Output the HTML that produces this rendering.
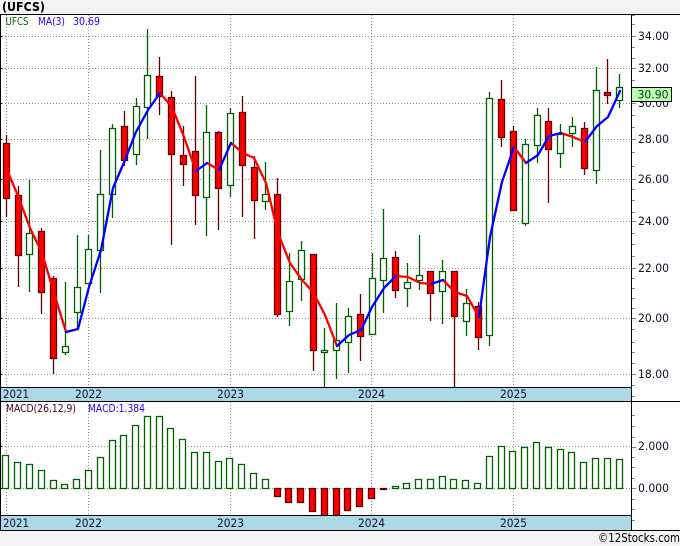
<!DOCTYPE html>
<html><head><meta charset="utf-8"><title>UFCS</title>
<style>
html,body{margin:0;padding:0;background:#f3f3f3;width:680px;height:546px;overflow:hidden}
svg{display:block}
text{font-family:"DejaVu Sans","Liberation Sans",sans-serif;font-size:11.5px;fill:#101028}
</style></head><body>
<svg width="680" height="546" viewBox="0 0 680 546" xmlns="http://www.w3.org/2000/svg">
<rect width="680" height="546" fill="#f3f3f3"/>
<rect x="0" y="14" width="680" height="517" fill="#fff"/>
<!-- grid -->
<path d="M2 36.5H632M2 68.5H632M2 103.5H632M2 139.5H632M2 179.5H632M2 221.5H632M2 268.5H632M2 318.5H632M2 374.5H632M2 446.5H632M2 488.5H632M6.5 15V387M88.5 15V387M230.5 15V387M371.5 15V387M513.5 15V387M6.5 402V516M88.5 402V516M230.5 402V516M371.5 402V516M513.5 402V516" stroke="#909090" stroke-width="1" stroke-dasharray="1 2" fill="none" shape-rendering="crispEdges"/>
<!-- green candles -->
<g stroke="#006000" stroke-width="1.3" fill="#fff">
<path fill="none" d="M29.5 180V292M65.5 282V355M77.5 235V329M88.5 235V283M100.5 150V293M112.5 124V218M136.5 98V165M147.5 29V139M206.5 105V236M230.5 108V197M265.5 162V210M289.5 253V326M301.5 241V301M324.5 328V387M336.5 303V379M348.5 308V373M372.5 253V334M383.5 209V313M407.5 263V307M419.5 235V290M442.5 260V324M466.5 289V336M489.5 92V346M525.5 139V226M537.5 108V163M560.5 124V168M572.5 117V147M596.5 67V184M619.5 74V108"/>
<path d="M26.5 233.5h6v21h-6zM62.5 346.5h6v6h-6zM74.5 287.5h6v25h-6zM85.5 249.5h6v34h-6zM97.5 194.5h6v56h-6zM109.5 128.5h6v66h-6zM133.5 106.5h6v48h-6zM144.5 75.5h6v32h-6zM203.5 132.5h6v65h-6zM227.5 113.5h6v72h-6zM262.5 194.5h6v7h-6zM286.5 281.5h6v30h-6zM298.5 250.5h6v29h-6zM321.5 350.5h6v2h-6zM333.5 340.5h6v10h-6zM345.5 316.5h6v26h-6zM369.5 278.5h6v56h-6zM380.5 258.5h6v22h-6zM404.5 282.5h6v6h-6zM416.5 275.5h6v5h-6zM439.5 271.5h6v20h-6zM463.5 303.5h6v18h-6zM486.5 98.5h6v237h-6zM522.5 144.5h6v79h-6zM534.5 115.5h6v30h-6zM557.5 134.5h6v19h-6zM569.5 126.5h6v7h-6zM593.5 90.5h6v80h-6zM616.5 87.5h6v13h-6z"/>
</g>
<!-- red candles -->
<g stroke="#600000" stroke-width="1.3" fill="#ff0000">
<path fill="none" d="M6.5 135V217M18.5 186V287M41.5 228V314M53.5 276V374M124.5 111V166M159.5 57V115M171.5 91V245M183.5 126V186M195.5 76V225M218.5 131V230M242.5 96V217M254.5 156V239M277.5 178V317M313.5 254V371M360.5 294V361M395.5 251V298M430.5 271V321M454.5 271V387M478.5 302V350M501.5 80V147M513.5 126V210M548.5 108V203M584.5 122V175M607.5 59V104"/>
<path d="M3.5 143.5h6v55h-6zM15.5 195.5h6v60h-6zM38.5 231.5h6v61h-6zM50.5 278.5h6v80h-6zM121.5 126.5h6v34h-6zM156.5 76.5h6v20h-6zM168.5 97.5h6v57h-6zM180.5 155.5h6v9h-6zM192.5 151.5h6v44h-6zM215.5 132.5h6v56h-6zM239.5 112.5h6v53h-6zM251.5 167.5h6v33h-6zM274.5 194.5h6v120h-6zM310.5 254.5h6v96h-6zM357.5 314.5h6v22h-6zM392.5 257.5h6v33h-6zM427.5 271.5h6v22h-6zM451.5 271.5h6v45h-6zM475.5 306.5h6v31h-6zM498.5 99.5h6v38h-6zM510.5 131.5h6v79h-6zM545.5 121.5h6v28h-6zM581.5 128.5h6v40h-6zM604.5 92.5h6v3h-6z"/>
</g>
<!-- MA line -->
<g fill="none" stroke-width="2.3" stroke-linejoin="round" stroke-linecap="round">
<path stroke="#ff0000" d="M7 170L18.5 197L30 228L42 253L54 293L66 332M160 93L172 107L184 137L196 171M207 163L219 170M231 143L243 153L254 158L266 183L278 233L290 263L302 280L313 292L325 315L337 346M396 276L408 277L420 283L431 284M443 280L455 292L467 296L479 317M514 147L526 163M561 133L573 137L585 142"/>
<path stroke="#0000ff" d="M66 332L78 329L89 287L101 250L113 188L125 160L136 132L148 110L160 93M196 171L207 163M219 170L231 143M337 346L349 335L361 330L372 307L384 288L396 276M431 284L443 280M479 317L490 237L502 182L514 147M526 163L538 155L549 136L561 133M585 142L597 126L608 117L620 91"/>
</g>
<!-- MACD bars -->
<g stroke="#006000" stroke-width="1.3" fill="#fff">
<path d="M2.5 455.5h6v33h-6zM14.5 462.5h6v26h-6zM26.5 464.5h6v24h-6zM38.5 470.5h6v18h-6zM50.5 480.5h6v8h-6zM61.5 484.5h6v4h-6zM73.5 479.5h6v9h-6zM85.5 470.5h6v18h-6zM97.5 457.5h6v31h-6zM109.5 440.5h6v48h-6zM120.5 435.5h6v53h-6zM132.5 425.5h6v63h-6zM144.5 416.5h6v72h-6zM156.5 416.5h6v72h-6zM167.5 428.5h6v60h-6zM179.5 439.5h6v49h-6zM191.5 452.5h6v36h-6zM203.5 452.5h6v36h-6zM215.5 461.5h6v27h-6zM226.5 458.5h6v30h-6zM238.5 464.5h6v24h-6zM250.5 473.5h6v15h-6zM262.5 479.5h6v9h-6zM392.5 486.5h6v2h-6zM403.5 483.5h6v5h-6zM415.5 479.5h6v9h-6zM427.5 479.5h6v9h-6zM439.5 476.5h6v12h-6zM450.5 479.5h6v9h-6zM462.5 480.5h6v8h-6zM474.5 483.5h6v5h-6zM486.5 456.5h6v32h-6zM498.5 446.5h6v42h-6zM509.5 451.5h6v37h-6zM521.5 447.5h6v41h-6zM533.5 442.5h6v46h-6zM545.5 447.5h6v41h-6zM557.5 449.5h6v39h-6zM568.5 452.5h6v36h-6zM580.5 462.5h6v26h-6zM592.5 458.5h6v30h-6zM604.5 458.5h6v30h-6zM616.5 459.5h6v29h-6z"/>
</g>
<g stroke="#600000" stroke-width="1.3" fill="#ff0000">
<path d="M274.5 488.5h6v8h-6zM285.5 488.5h6v14h-6zM297.5 488.5h6v14h-6zM309.5 488.5h6v23h-6zM321.5 488.5h6v28h-6zM333.5 488.5h6v28h-6zM344.5 488.5h6v22h-6zM356.5 488.5h6v18h-6zM368.5 488.5h6v10h-6zM380.5 488.5h6v1h-6z"/>
</g>
<!-- date bands -->
<rect x="1" y="388" width="631" height="13" fill="#add8e6"/>
<rect x="1" y="516" width="631" height="14" fill="#add8e6"/>
<!-- frame -->
<g shape-rendering="crispEdges" fill="none" stroke="#000" stroke-width="1">
<path d="M1 14.5H680M0.5 14V531M0 387.5H632M0 401.5H680M0 515.5H632M0 530.5H680M631.5 14V531" />
<path d="M0 36.5H2M0 68.5H2M0 103.5H2M0 139.5H2M0 179.5H2M0 221.5H2M0 268.5H2M0 318.5H2M0 374.5H2M0 446.5H2M0 488.5H2"/>
</g>
<!-- axis ticks -->
<path shape-rendering="crispEdges" stroke="#808080" fill="none" d="M632 15.5H635M632 24.5H635M632 36.5H636M632 47.5H635M632 58.5H635M632 68.5H636M632 80.5H635M632 90.5H635M632 103.5H636M632 115.5H635M632 127.5H635M632 139.5H636M632 152.5H635M632 166.5H635M632 179.5H636M632 189.5H635M632 200.5H635M632 212.5H635M632 221.5H636M632 233.5H635M632 244.5H635M632 256.5H635M632 268.5H636M632 278.5H635M632 288.5H635M632 298.5H635M632 308.5H635M632 318.5H636M632 329.5H635M632 342.5H635M632 352.5H635M632 363.5H635M632 374.5H636M632 385.5H635M632 396.5H635M632 415.5H635M632 426.5H635M632 437.5H635M632 447.5H636M632 457.5H635M632 467.5H635M632 478.5H635M632 488.5H636M632 499.5H635M632 509.5H635M632 520.5H635"/>
<!-- title & labels -->
<text x="2" y="11" style="font-weight:bold;fill:#000;font-size:12.5px" textLength="43" lengthAdjust="spacingAndGlyphs">(UFCS)</text>
<text x="5.5" y="25" style="font-size:11px;fill:#006000" textLength="23" lengthAdjust="spacingAndGlyphs">UFCS</text>
<text x="38" y="25" style="font-size:11px;fill:#2000ff" textLength="27" lengthAdjust="spacingAndGlyphs">MA(3)</text>
<text x="73" y="25" style="font-size:11px;fill:#2000ff" textLength="27" lengthAdjust="spacingAndGlyphs">30.69</text>
<text x="6" y="412" style="font-size:11px;fill:#400020" textLength="70" lengthAdjust="spacingAndGlyphs">MACD(26,12,9)</text>
<text x="88" y="412" style="font-size:11px;fill:#2000ff" textLength="57" lengthAdjust="spacingAndGlyphs">MACD:1.384</text>
<g>
<text x="638" y="40" textLength="31" lengthAdjust="spacingAndGlyphs">34.00</text>
<text x="638" y="72" textLength="31" lengthAdjust="spacingAndGlyphs">32.00</text>
<text x="638" y="107" textLength="31" lengthAdjust="spacingAndGlyphs">30.00</text>
<text x="638" y="143" textLength="31" lengthAdjust="spacingAndGlyphs">28.00</text>
<text x="638" y="183" textLength="31" lengthAdjust="spacingAndGlyphs">26.00</text>
<text x="638" y="225" textLength="31" lengthAdjust="spacingAndGlyphs">24.00</text>
<text x="638" y="272" textLength="31" lengthAdjust="spacingAndGlyphs">22.00</text>
<text x="638" y="322" textLength="31" lengthAdjust="spacingAndGlyphs">20.00</text>
<text x="638" y="378" textLength="31" lengthAdjust="spacingAndGlyphs">18.00</text>
<text x="638" y="450" textLength="31" lengthAdjust="spacingAndGlyphs">2.000</text>
<text x="638" y="492" textLength="31" lengthAdjust="spacingAndGlyphs">0.000</text>
</g>
<rect x="631.5" y="87.5" width="40" height="14" fill="#b8ffb0" stroke="#000" shape-rendering="crispEdges"/>
<text x="637.5" y="98.5" textLength="31" lengthAdjust="spacingAndGlyphs" style="fill:#103020">30.90</text>
<g>
<text x="3" y="398" textLength="26" lengthAdjust="spacingAndGlyphs">2021</text>
<text x="75" y="398" textLength="27" lengthAdjust="spacingAndGlyphs">2022</text>
<text x="217" y="398" textLength="27" lengthAdjust="spacingAndGlyphs">2023</text>
<text x="358" y="398" textLength="27" lengthAdjust="spacingAndGlyphs">2024</text>
<text x="500" y="398" textLength="27" lengthAdjust="spacingAndGlyphs">2025</text>
<text x="3" y="527" textLength="26" lengthAdjust="spacingAndGlyphs">2021</text>
<text x="75" y="527" textLength="27" lengthAdjust="spacingAndGlyphs">2022</text>
<text x="217" y="527" textLength="27" lengthAdjust="spacingAndGlyphs">2023</text>
<text x="358" y="527" textLength="27" lengthAdjust="spacingAndGlyphs">2024</text>
<text x="500" y="527" textLength="27" lengthAdjust="spacingAndGlyphs">2025</text>
</g>
<text x="598" y="542" textLength="82" lengthAdjust="spacingAndGlyphs" style="fill:#000;font-size:12.5px">©12Stocks.com</text>
</svg>
</body></html>
